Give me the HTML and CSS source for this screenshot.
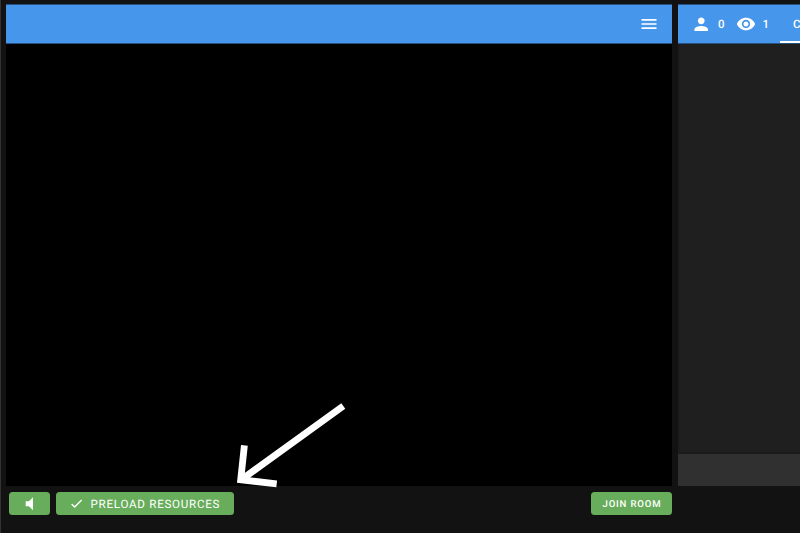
FILE: index.html
```html
<!DOCTYPE html>
<html lang="en">
<head>
<meta charset="utf-8">
<title>Room</title>
<link rel="stylesheet" href="styles.css">
</head>
<body>
<div class="app">
  <main class="stage">
    <header class="bar stage-bar">
      <svg class="menu-icon" viewBox="0 0 24 24"><path d="M3 18h18v-2H3v2zm0-5h18v-2H3v2zm0-7v2h18V6H3z"/></svg>
    </header>
    <div class="video"></div>
    <footer class="controls">
      <button class="btn sound"><svg viewBox="0 0 24 24"><path d="M7 9v6h4l5 5V4l-5 5H7z"/></svg></button>
      <button class="btn preload"><svg viewBox="0 0 24 24"><path d="M9 16.17L4.83 12l-1.42 1.41L9 19 21 7l-1.41-1.41z"/></svg><span>PRELOAD RESOURCES</span></button>
      <button class="btn join"><span>JOIN ROOM</span></button>
    </footer>
  </main>
  <aside class="side">
    <header class="bar side-bar">
      <svg class="person" viewBox="0 0 24 24"><path d="M12 12c2.21 0 4-1.79 4-4s-1.79-4-4-4-4 1.79-4 4 1.79 4 4 4zm0 2c-2.67 0-8 1.34-8 4v2h16v-2c0-2.66-5.33-4-8-4z"/></svg>
      <span class="count users">0</span>
      <svg class="eye" viewBox="0 0 24 24"><path d="M12 4.5C7 4.5 2.73 7.61 1 12c1.73 4.39 6 7.5 11 7.5s9.27-3.11 11-7.5c-1.73-4.39-6-7.5-11-7.5zM12 17c-2.76 0-5-2.24-5-5s2.24-5 5-5 5 2.24 5 5-2.24 5-5 5zm0-8c-1.66 0-3 1.34-3 3s1.34 3 3 3 3-1.34 3-3-1.34-3-3-3z"/></svg>
      <span class="count views">1</span>
      <div class="tab">C</div>
    </header>
    <div class="messages"></div>
    <div class="composer"></div>
  </aside>
</div>
<svg class="arrow" viewBox="230 395 120 100"><path d="M343.3 406L241.5 479.5M244.4 445.3L240.7 479.8L276.7 483.8"/></svg>
</body>
</html>
```
FILE: styles.css
```css
* { box-sizing: border-box; }
body {
  margin: 0;
  background: #121212;
  color: #fff;
  font-family: Roboto, sans-serif;
  text-rendering: geometricPrecision;
  overflow: hidden;
}
.app {
  display: flex;
  gap: 6px;
  height: 533px;
  padding: 4px 0 0 5px;
  border-left: 1px solid #333;
}
svg { display: block; flex: none; fill: #fff; }
.stage { width: 666px; flex: none; display: flex; flex-direction: column; }
.bar { height: 40px; flex: none; display: flex; align-items: center; background: #4696ec; border: 1px solid #28527f; border-width: 1px 0; }
.stage-bar { justify-content: flex-end; padding-right: 13px; }
.menu-icon { width: 20px; height: 20px; }
.video { height: 442px; background: #000; }
.controls { display: flex; padding: 6px 0 0 3px; }
.btn {
  height: 23px;
  padding: 0;
  border: 0;
  border-radius: 3.5px;
  background: #67ad5b;
  color: #fff;
  font: 400 11.6px Roboto, sans-serif;
  text-rendering: geometricPrecision;
  display: flex;
  align-items: center;
  white-space: nowrap;
}
.sound { width: 41px; margin-right: 6px; justify-content: center; }
.sound svg { width: 19.5px; height: 19.5px; }
.preload { width: 178px; padding-left: 12.5px; letter-spacing: .74px; }
.preload svg { width: 15px; height: 15px; margin-right: 7px; }
.join { width: 81px; margin-left: auto; padding: 1px 0 0 11.5px; font-size: 9.6px; font-weight: 500; letter-spacing: .82px; }
.side { width: 122px; flex: none; display: flex; flex-direction: column; }
.side-bar { padding-left: 13px; font-size: 11.5px; font-weight: 500; }
.person { width: 20.5px; height: 20.5px; }
.users { width: 7px; margin: 0 11px 0 6.5px; }
.eye { width: 20px; height: 20px; }
.views { width: 7px; margin: 0 10.5px 0 6.5px; }
.tab { width: 20px; height: 38px; padding-left: 13px; line-height: 39px; border-bottom: 2px solid #fff; }
.messages { height: 410px; background: #1f1f1f; border-left: 2px solid #1c1c1c; border-bottom: 2px solid #1b1b1b; }
.composer { height: 32px; background: #303030; }
.arrow { position: absolute; left: 230px; top: 395px; width: 120px; height: 100px; fill: none; stroke: #fff; stroke-width: 6.8; }
```
